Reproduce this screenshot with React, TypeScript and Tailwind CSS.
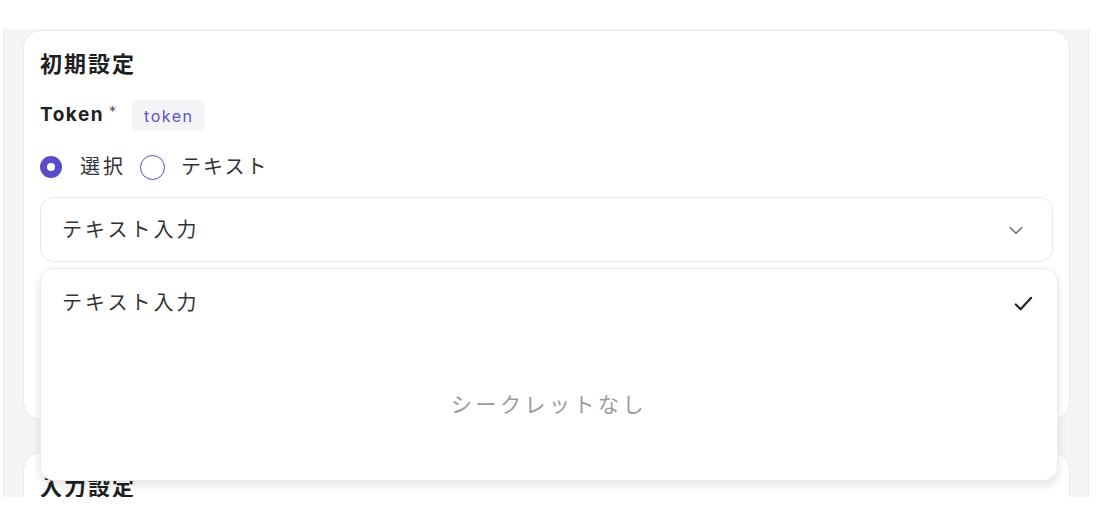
import React from "react";

const font = { fontFamily: '"Inter", "Noto Sans CJK JP", sans-serif' };

function Chevron() {
  return (
    <svg width="20" height="20" viewBox="0 0 24 24" fill="none" stroke="#6b6b6b" strokeWidth="1.7" strokeLinecap="round" strokeLinejoin="round">
      <path d="M5 9l7 7 7-7" />
    </svg>
  );
}

function Check() {
  return (
    <svg width="23" height="23" viewBox="0 0 24 24" fill="none" stroke="#222" strokeWidth="2.2" strokeLinecap="round" strokeLinejoin="round">
      <path d="M4 13l5 5L20 6" />
    </svg>
  );
}

export default function App() {
  return (
    <div className="w-[1104px] h-[516px] bg-white pt-[29px]" style={font}>
      <div className="relative ml-[3px] w-[1086px] h-[468px] bg-[#f5f5f5] border-l border-r border-[#ececec] overflow-hidden pl-[19px] pr-[18px]">
        <div className="mt-[1px] h-[390px] rounded-[18px] bg-white border border-[#e9e9e9] px-[16px] pt-[19px]">
          <div className="text-[22px] leading-[28px] font-bold text-[#1f1f1f] tracking-[2px]">初期設定</div>
          <div className="mt-[22px] flex items-center h-[31px]">
            <span className="text-[19px] font-bold text-[#1f1f1f] tracking-[1.5px]">Token</span>
            <span className="ml-[5px] text-[14px] text-[#555] -mt-[8px]">*</span>
            <span className="ml-[16px] h-[31px] px-[12px] flex items-center rounded-md bg-[#f4f4f6] text-[16px] text-[#5b52c8] tracking-[1.5px]">token</span>
          </div>
          <div className="mt-[24px] flex items-center h-[24px] text-[20px] text-[#333]">
            <span className="w-[22px] h-[22px] rounded-full bg-[#5a4cc6] flex items-center justify-center">
              <span className="w-[8px] h-[8px] rounded-full bg-white" />
            </span>
            <span className="ml-[18px] tracking-[3px]">選択</span>
            <span className="ml-[14px] w-[25px] h-[25px] rounded-full border-[1.5px] border-[#5a4cc6]" />
            <span className="ml-[16px] tracking-[2px]">テキスト</span>
          </div>
          <div className="mt-[18px] h-[65px] rounded-[14px] border border-[#e7e7e7] flex items-center justify-between pl-[21px] pr-[26px] text-[20px] text-[#333]">
            <span className="tracking-[3px]">テキスト入力</span>
            <Chevron />
          </div>
        </div>
        <div className="mt-[32px] h-[80px] rounded-[18px] bg-white border border-[#e9e9e9] px-[16px] pt-[20px]">
          <div className="text-[22px] leading-[28px] font-bold text-[#1f1f1f] tracking-[2px]">入力設定</div>
        </div>
        <div className="absolute left-[36px] top-[239px] w-[1018px] h-[213px] rounded-[14px] bg-white border border-[#ececec] shadow-[0_4px_10px_rgba(0,0,0,0.12)] flex flex-col">
          <div className="h-[68px] flex items-center justify-between pl-[21px] pr-[22px] text-[20px] text-[#333]">
            <span className="tracking-[3px]">テキスト入力</span>
            <Check />
          </div>
          <div className="flex-1 flex items-center justify-center pb-[8px] text-[21px] text-[#9a9a9a] tracking-[3.5px]">シークレットなし</div>
        </div>
      </div>
    </div>
  );
}
